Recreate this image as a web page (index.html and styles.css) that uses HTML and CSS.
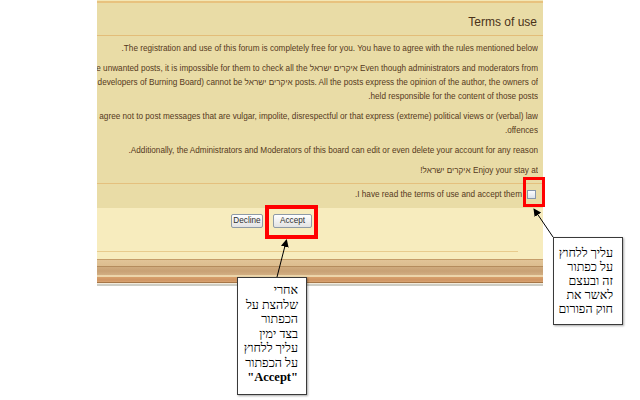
FILE: index.html
```html
<!DOCTYPE html>
<html lang="he">
<head>
<meta charset="utf-8">
<title>Terms of use</title>
<link rel="stylesheet" href="styles.css">
</head>
<body>
<div class="stage">
  <div class="panel">
    <div class="upper">
      <div class="title">Terms of use</div>
      <div class="terms">
        <p><span class="ln">The registration and use of this forum is completely free for you. You have to agree with the rules mentioned below.</span></p>
        <p>
          <span class="ln">Even though administrators and moderators from איקרים ישראל will try to remove unwanted posts, it is impossible for them to check all the</span>
          <span class="ln">posts. All the posts express the opinion of the author, the owners of איקרים ישראל and the developers of Burning Board) cannot be</span>
          <span class="ln">held responsible for the content of those posts.</span>
        </p>
        <p>
          <span class="ln">You agree not to post messages that are vulgar, impolite, disrespectful or that express (extreme) political views or (verbal) law</span>
          <span class="ln">offences.</span>
        </p>
        <p><span class="ln">Additionally, the Administrators and Moderators of this board can edit or even delete your account for any reason.</span></p>
        <p><span class="ln">Enjoy your stay at איקרים ישראל!</span></p>
      </div>
      <div class="check-row">
        <span class="checkbox"></span>
        <span class="check-label">I have read the terms of use and accept them.</span>
      </div>
    </div>
    <div class="lower">
      <div class="buttons">
        <button class="btn btn-decline">Decline</button>
        <button class="btn btn-accept">Accept</button>
      </div>
      <div class="rule"></div>
    </div>
    <div class="wood"></div>
  </div>

  <div class="mark mark-check"></div>
  <div class="mark mark-accept"></div>

  <div class="note note-accept">
    <div>אחרי</div>
    <div>שלהצת על</div>
    <div>הכפתור</div>
    <div>בצד ימין</div>
    <div>עליך ללחוץ</div>
    <div>על הכפתור</div>
    <div class="strong">"Accept"</div>
  </div>

  <div class="note note-check">
    <div>עליך ללחוץ</div>
    <div>על כפתור</div>
    <div>זה ובעצם</div>
    <div>לאשר את</div>
    <div>חוק הפורום</div>
  </div>

  <svg class="arrows" width="640" height="400" viewBox="0 0 640 400">
    <defs>
      <marker id="head" markerWidth="8" markerHeight="8" refX="7" refY="4" orient="auto" markerUnits="userSpaceOnUse">
        <path d="M0,0 L8,4 L0,8 Z" fill="#000"/>
      </marker>
    </defs>
    <line x1="277" y1="277" x2="286.5" y2="240" stroke="#000" stroke-width="1" marker-end="url(#head)"/>
    <line x1="553" y1="237" x2="534" y2="209" stroke="#000" stroke-width="1" marker-end="url(#head)"/>
  </svg>
</div>
</body>
</html>
```

FILE: styles.css
```css
html, body {
  margin: 0;
  padding: 0;
  background: #ffffff;
}

.stage {
  position: relative;
  width: 640px;
  height: 400px;
  overflow: hidden;
  font-family: "Liberation Sans", Arial, sans-serif;
}

.panel {
  margin-left: 97px;
  width: 446px;
  padding-top: 1px;
  background: #f3e6b4;
}

.upper {
  background: #e9dca6;
  border-top: 2px solid #e8c27e;
}

.title {
  direction: rtl;
  text-align: right;
  font-size: 12px;
  line-height: 14px;
  color: #4a3219;
  padding: 12px 6px 6px 0;
  border-bottom: 1px solid #e3bd79;
}

.terms {
  direction: rtl;
  padding: 6px 5px 0 0;
  color: #55391c;
  font-size: 8.2px;
  line-height: 14px;
}

.terms p {
  margin: 0 0 6px 0;
}

.terms .ln {
  display: block;
  white-space: nowrap;
  overflow: hidden;
  text-align: right;
}

.check-row {
  direction: rtl;
  display: flex;
  align-items: center;
  gap: 5px;
  height: 24px;
  padding-right: 7px;
  border-top: 1px solid #e4c07e;
  margin-top: -1px;
  font-size: 8.2px;
  color: #55391c;
}

.checkbox {
  width: 7px;
  height: 7px;
  border: 1px solid #8797ab;
  background: linear-gradient(#fbfcfd, #dde3ea);
  margin-top: -3px;
}

.check-label {
  margin-top: -3px;
}

.lower {
  background: #f7ecbe;
  height: 51px;
  padding-top: 6px;
  box-sizing: border-box;
}

.buttons {
  display: flex;
  gap: 10px;
  margin-left: 134px;
}

.btn {
  font-family: "Liberation Sans", Arial, sans-serif;
  font-size: 8.2px;
  color: #2e2e2e;
  height: 14px;
  padding: 0;
  border: 1px solid #8e9aa6;
  border-radius: 2px;
  background: linear-gradient(#ffffff, #e2e2e2);
  line-height: 12px;
  text-align: center;
}

.btn-decline {
  width: 32px;
}

.btn-accept {
  width: 39px;
}

.rule {
  margin-top: 23px;
  width: 421px;
  height: 1px;
  background: #e8cb8d;
}

.wood {
  height: 28px;
  background: linear-gradient(
    #c59d6a 0px, #c59d6a 1px,
    #e1c497 1px, #dcbd8e 7px,
    #b48c5d 7px, #b48c5d 8px,
    #cfab7e 8px, #c8a174 12px, #d2ae82 16px,
    #ecd5aa 16px, #ecd5aa 18px,
    #d7a06c 18px, #cf9462 21px, #d9a472 23px,
    #a67647 23px, #a67647 24px,
    #f2ebdc 24px, #f2ebdc 25px,
    #cdcdc5 25px, #cdcdc5 27px,
    #ffffff 27px
  );
}

.mark {
  position: absolute;
  border: 3px solid #ff0000;
  box-sizing: border-box;
}

.mark-check {
  left: 523px;
  top: 177px;
  width: 22px;
  height: 30px;
}

.mark-accept {
  left: 265px;
  top: 205px;
  width: 53px;
  height: 34px;
  border-width: 4px;
}

.note {
  position: absolute;
  box-sizing: border-box;
  background: #ffffff;
  border: 1px solid #3a3a3a;
  box-shadow: 1px 1px 2px rgba(0, 0, 0, 0.35);
  direction: rtl;
  text-align: right;
  font-family: "Liberation Serif", "DejaVu Serif", "Times New Roman", serif;
  font-size: 12.5px;
  line-height: 14.5px;
  color: #000000;
}

.note-accept {
  left: 237px;
  top: 277px;
  width: 70px;
  height: 118px;
  padding: 5px 8px 0 0;
}

.note-check {
  left: 553px;
  top: 237px;
  width: 70px;
  height: 88px;
  padding: 8px 9px 0 0;
  line-height: 14px;
}

.strong {
  font-weight: bold;
}

.arrows {
  position: absolute;
  left: 0;
  top: 0;
  pointer-events: none;
}
```
